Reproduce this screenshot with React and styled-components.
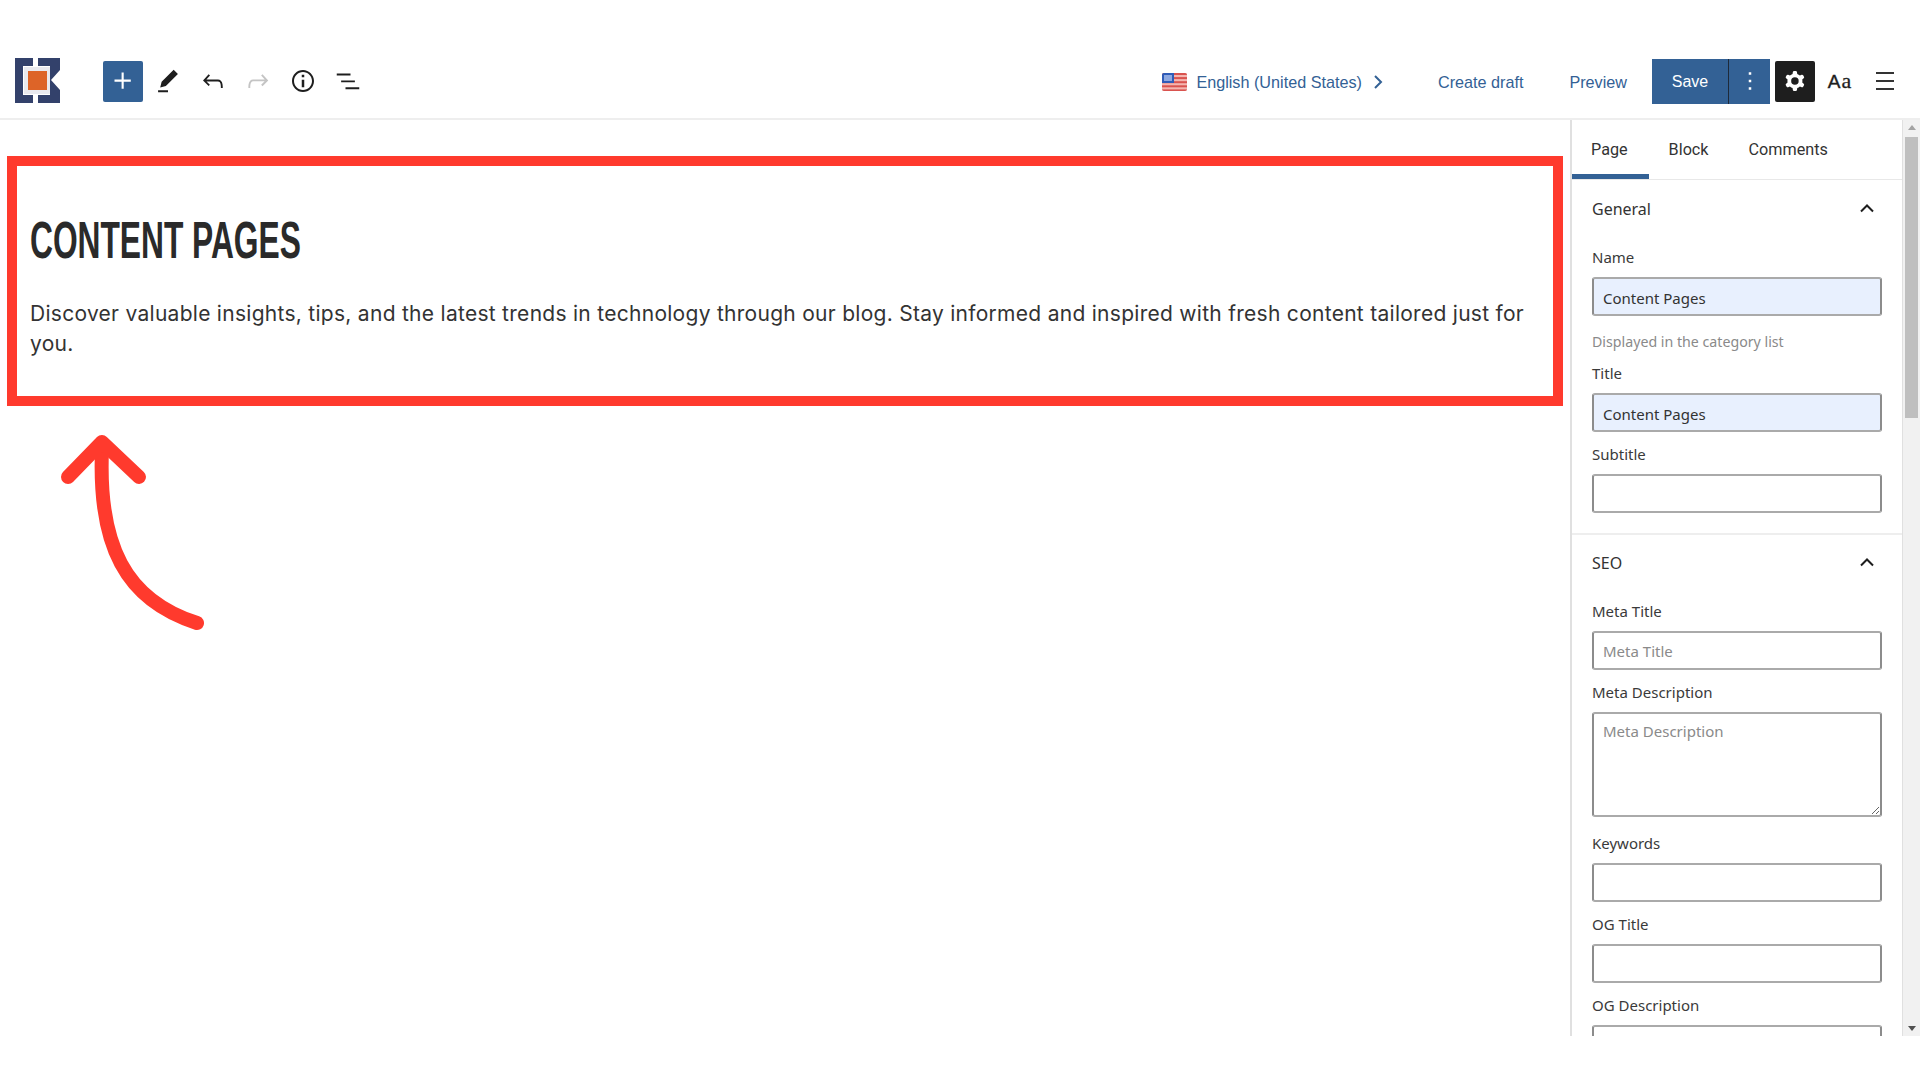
import React from "react";
import styled, { createGlobalStyle } from "styled-components";

const Global = createGlobalStyle`
  html, body { margin: 0; padding: 0; background: #fff; }
  * { box-sizing: border-box; }
`;

const Page = styled.div`
  width: 1920px;
  height: 1080px;
  overflow: hidden;
  display: flex;
  flex-direction: column;
  background: #fff;
  font-family: "Liberation Sans", Arial, sans-serif;
`;

const Header = styled.header`
  height: 120px;
  padding: 44px 12px 0 10px;
  border-bottom: 2px solid #eeeeee;
  display: flex;
  align-items: center;
  flex: none;
`;

const LogoMark = styled.svg`
  width: 60px;
  height: 60px;
  margin-right: 33px;
  flex: none;
`;

const AddButton = styled.div`
  width: 40px;
  height: 41px;
  margin-right: 2px;
  border-radius: 2px;
  background: #336195;
  color: #fff;
  display: flex;
  align-items: center;
  justify-content: center;
`;

const ToolButton = styled.div`
  width: ${(p) => p.$w || 45}px;
  height: 41px;
  display: flex;
  align-items: center;
  justify-content: center;
  color: ${(p) => p.$color || "#1e1e1e"};
  flex: none;
`;

const Glyph = styled.svg`
  width: ${(p) => p.$size || 30}px;
  height: ${(p) => p.$size || 30}px;
  fill: currentColor;
  display: block;
`;

const Right = styled.div`
  margin-left: auto;
  display: flex;
  align-items: center;
`;

const Language = styled.div`
  display: flex;
  align-items: center;
  margin-top: 2px;
  color: #336195;
  font-size: 16.2px;
`;

const Flag = styled.svg`
  width: 25px;
  height: 18px;
  margin-right: 9px;
  border-radius: 2px;
`;

const Chevron = styled.svg`
  width: 12px;
  height: 16px;
  margin-left: 10px;
  fill: none;
  stroke: #336195;
  stroke-width: 2;
`;

const NavLink = styled.a`
  color: #336195;
  font-size: 16.2px;
  margin-top: 2px;
  margin-left: ${(p) => p.$ml}px;
`;

const SaveGroup = styled.div`
  margin-left: 25px;
  margin-right: 5px;
  height: 45px;
  display: flex;
  background: #336195;
  color: #fff;
`;

const SaveLabel = styled.div`
  width: 77px;
  padding-top: 2px;
  border-right: 1px solid #1e2a3a;
  display: flex;
  align-items: center;
  justify-content: center;
  font-size: 16px;
  font-weight: 500;
`;

const SaveMore = styled.div`
  width: 41px;
  display: flex;
  align-items: center;
  justify-content: center;
`;

const SettingsButton = styled(ToolButton)`
  width: 40px;
  border-radius: 2px;
  background: #1e1e1e;
  color: #fff;
`;

const TypeButton = styled.div`
  width: 47px;
  margin-left: 1px;
  height: 41px;
  display: flex;
  align-items: baseline;
  justify-content: center;
  padding-top: 8px;
  color: #1e1e1e;
  font-size: 19px;
  line-height: 24px;
`;

const TypeA = styled.span`
  font-family: "Liberation Sans", sans-serif;
  font-weight: 400;
  -webkit-text-stroke: 0.4px #1e1e1e;
  margin-right: 1px;
`;

const TypeB = styled.span`
  font-family: "Liberation Serif", serif;
  font-weight: 400;
  -webkit-text-stroke: 0.3px #1e1e1e;
  font-size: 22px;
`;

const MenuButton = styled.svg`
  width: 18px;
  height: 20px;
  margin: 0 14px 0 13px;
  stroke: #333;
  stroke-width: 2;
`;

const Body = styled.div`
  display: flex;
  height: 916px;
  flex: none;
  overflow: hidden;
`;

const Main = styled.main`
  width: 1570px;
  flex: none;
  padding: 36px 7px 0;
`;

const Frame = styled.section`
  height: 250px;
  border: 10px solid #ff3a2d;
  padding: 44px 13px 0;
  color: #333;
`;

const Heading = styled.h1`
  margin: 0 0 29px;
  height: 60px;
  font-family: "Liberation Sans Narrow", "Liberation Sans", sans-serif;
  font-size: 52px;
  line-height: 60px;
  font-weight: 700;
  color: #2a2a2a;
  white-space: nowrap;
  transform: scaleX(0.61);
  transform-origin: left center;
`;

const Lead = styled.p`
  margin: 0;
  font-family: Inter, "Open Sans", sans-serif;
  font-size: 21px;
  letter-spacing: 0.28px;
  line-height: 30px;
  color: #333;
`;

const ArrowMark = styled.svg`
  display: block;
  width: 160px;
  height: 210px;
  margin: 20px 0 0 46px;
  fill: none;
  stroke: #ff3a2d;
  stroke-width: 14;
  stroke-linecap: round;
  stroke-linejoin: round;
`;

const Sidebar = styled.aside`
  width: 333px;
  flex: none;
  border-left: 2px solid #e0e0e0;
  border-right: 1px solid #e0e0e0;
  overflow: hidden;
`;

const Tabs = styled.nav`
  height: 60px;
  display: flex;
  border-bottom: 1px solid #e8e8e8;
`;

const Tab = styled.div`
  height: 59px;
  padding: 5px ${(p) => p.$pr || 20}px 0 ${(p) => p.$pl || 20}px;
  display: flex;
  align-items: center;
  font-family: Roboto, sans-serif;
  font-size: 16.2px;
  color: #333;
  border-bottom: 5px solid ${(p) => (p.$active ? "#336195" : "transparent")};
`;

const Section = styled.section`
  padding: ${(p) => p.$top || 0}px 20px 20px;
  border-bottom: ${(p) => (p.$last ? "none" : "2px solid #eeeeee")};
  font-family: "Noto Sans", "Open Sans", sans-serif;
`;

const SectionHead = styled.div`
  height: 56px;
  margin-bottom: 10px;
  display: flex;
  align-items: center;
  justify-content: space-between;
  font-size: 16px;
  color: #333;
`;

const Caret = styled.svg`
  width: 14px;
  height: 10px;
  margin: 0 8px 2px 0;
  fill: none;
  stroke: #1e1e1e;
  stroke-width: 2;
`;

const Field = styled.div`
  margin-top: ${(p) => p.$mt ?? 12}px;
  display: flex;
  flex-direction: column;
`;

const FieldLabel = styled.label`
  height: 20px;
  margin-bottom: 10px;
  font-size: 15px;
  line-height: 20px;
  color: #3a3a3a;
`;

const Help = styled.div`
  height: 20px;
  margin-top: 16px;
  font-size: 14.2px;
  line-height: 20px;
  color: #8a8a8a;
`;

const TextInput = styled.input`
  width: 290px;
  height: 39px;
  padding: ${(p) => (p.$filled ? 2 : 0)}px 9px 0;
  flex: none;
  border: 2px solid;
  border-color: #aaaaaa #8c8c8c #aaaaaa #8c8c8c;
  border-radius: 3px;
  outline: none;
  font: inherit;
  font-size: 15px;
  color: #333;
  background: ${(p) => (p.$filled ? "#e8f0fe" : "#fff")};
  &::placeholder { color: #8a8a8a; opacity: 1; }
`;

const TextArea = styled.textarea`
  width: 290px;
  height: 105px;
  padding: 7px 9px 6px;
  flex: none;
  display: block;
  border: 2px solid;
  border-color: #aaaaaa #8c8c8c #aaaaaa #8c8c8c;
  border-radius: 3px;
  outline: none;
  font: inherit;
  font-size: 15px;
  line-height: 20px;
  color: #333;
  &::placeholder { color: #8a8a8a; opacity: 1; }
`;

const Track = styled.div`
  width: 17px;
  flex: none;
  background: #f1f1f1;
  display: flex;
  flex-direction: column;
  align-items: center;
  padding: 5px 0 5px;
`;

const ScrollUp = styled.div`
  width: 0;
  height: 0;
  border: 4px solid transparent;
  border-top: 0;
  border-bottom: 5px solid #a3a3a3;
`;

const Thumb = styled.div`
  width: 13px;
  height: 281px;
  margin-top: 7px;
  background: #bfbfbf;
`;

const ScrollDown = styled.div`
  width: 0;
  height: 0;
  margin-top: auto;
  border: 4px solid transparent;
  border-bottom: 0;
  border-top: 5px solid #505050;
`;

const Icon = ({ d, size, evenodd }) => (
  <Glyph $size={size} viewBox="0 0 24 24">
    <path d={d} fillRule={evenodd ? "evenodd" : undefined} clipRule={evenodd ? "evenodd" : undefined} />
  </Glyph>
);

const icons = {
  plus: "M11 12.5V17.5H12.5V12.5H17.5V11H12.5V6H11V11H6V12.5H11Z",
  pen: "m19 7-3-3-8.5 8.5-1 4 4-1L19 7Zm-7 11.5H5V20h7v-1.5Z",
  undo: "M18.3 11.7c-.6-.6-1.4-.9-2.3-.9H6.7l2.9-3.3-1.1-1-4.5 5L8.5 16l1-1-2.7-2.7H16c.5 0 .9.2 1.3.5 1 1 1 3.4 1 4.5v.3h1.5v-.2c0-1.5 0-4.3-1.5-5.7z",
  redo: "M15.6 6.5l-1.1 1 2.9 3.3H8c-.9 0-1.7.3-2.3.9-1.4 1.5-1.4 4.2-1.4 5.6v.2h1.5v-.3c0-1.1 0-3.5 1-4.5.3-.3.7-.5 1.3-.5h9.2L14.5 15l1.1 1.1 4.6-4.6-4.6-5z",
  info: "M12 3.2c-4.8 0-8.8 3.9-8.8 8.8 0 4.8 3.9 8.8 8.8 8.8 4.8 0 8.8-3.9 8.8-8.8 0-4.8-4-8.8-8.8-8.8zm0 16c-4 0-7.2-3.3-7.2-7.2C4.8 8 8 4.8 12 4.8s7.2 3.3 7.2 7.2c0 4-3.2 7.2-7.2 7.2zM11 17h2v-6h-2v6zm0-8h2V7h-2v2z",
  list: "M3 6h11v1.5H3V6Zm3.5 5.5h11V13h-11v-1.5ZM21 17H10v1.5h11V17Z",
  dots: "M13 19h-2v-2h2v2zm0-6h-2v-2h2v2zm0-6h-2V5h2v2z",
  cog: "M10.289 4.836A1 1 0 0111.275 4h1.306a1 1 0 01.987.836l.244 1.466c.787.26 1.503.679 2.108 1.218l1.393-.522a1 1 0 011.216.437l.653 1.13a1 1 0 01-.23 1.273l-1.148.944a6.025 6.025 0 010 2.435l1.149.946a1 1 0 01.23 1.272l-.653 1.13a1 1 0 01-1.216.437l-1.394-.522c-.605.54-1.32.958-2.108 1.218l-.244 1.466a1 1 0 01-.987.836h-1.306a1 1 0 01-.986-.836l-.244-1.466a5.995 5.995 0 01-2.108-1.218l-1.394.522a1 1 0 01-1.217-.436l-.653-1.131a1 1 0 01.23-1.272l1.149-.946a6.026 6.026 0 010-2.435l-1.148-.944a1 1 0 01-.23-1.272l.653-1.131a1 1 0 011.217-.437l1.393.522a5.994 5.994 0 012.108-1.218l.244-1.466zM14.929 12a3 3 0 11-6 0 3 3 0 016 0z",
};

const Logo = () => (
  <LogoMark viewBox="0 0 60 60">
    <path fill="#33416b" d="M5 7h18v8H13v29h10v8H5z" />
    <path fill="#33416b" d="M28 7h22v12l-9 10 9 10v13H28v-8h12V15H28z" />
    <rect x="14" y="16" width="26" height="27" fill="#e9e9ee" />
    <rect x="18" y="20" width="19" height="19" fill="#dd6428" />
  </LogoMark>
);

const UsFlag = () => (
  <Flag viewBox="0 0 25 18">
    <rect width="25" height="18" fill="#f4b6b0" />
    {[0, 2, 4, 6, 8].map((i) => (
      <rect key={i} y={i * 2.05} width="25" height="2" fill="#d9534f" />
    ))}
    <rect width="12" height="10" fill="#2f5cb8" />
    <rect x="2" y="2" width="8" height="6" fill="#8ea8e0" />
  </Flag>
);

const Caretup = () => (
  <Caret viewBox="0 0 14 10">
    <path d="M1 8.5 7 2.5 13 8.5" />
  </Caret>
);

const Labeled = ({ label, value, placeholder, mt }) => (
  <Field $mt={mt}>
    <FieldLabel>{label}</FieldLabel>
    <TextInput readOnly $filled={!!value} value={value || ""} placeholder={placeholder} />
  </Field>
);

export default function App() {
  return (
    <Page>
      <Global />
      <Header>
        <Logo />
        <AddButton><Icon d={icons.plus} size={34} /></AddButton>
        <ToolButton><Icon d={icons.pen} size={34} /></ToolButton>
        <ToolButton><Icon d={icons.undo} /></ToolButton>
        <ToolButton $color="#c4c4c4"><Icon d={icons.redo} /></ToolButton>
        <ToolButton><Icon d={icons.info} /></ToolButton>
        <ToolButton><Icon d={icons.list} /></ToolButton>
        <Right>
          <Language>
            <UsFlag />
            English (United States)
            <Chevron viewBox="0 0 12 16"><path d="M3 2l6 6-6 6" /></Chevron>
          </Language>
          <NavLink $ml={54}>Create draft</NavLink>
          <NavLink $ml={46}>Preview</NavLink>
          <SaveGroup>
            <SaveLabel>Save</SaveLabel>
            <SaveMore><Icon d={icons.dots} size={30} /></SaveMore>
          </SaveGroup>
          <SettingsButton><Icon d={icons.cog} evenodd /></SettingsButton>
          <TypeButton><TypeA>A</TypeA><TypeB>a</TypeB></TypeButton>
          <MenuButton viewBox="0 0 18 20">
            <path d="M0 2h18M0 10h18M0 18h18" />
          </MenuButton>
        </Right>
      </Header>
      <Body>
        <Main>
          <Frame>
            <Heading>CONTENT PAGES</Heading>
            <Lead>
              Discover valuable insights, tips, and the latest trends in technology through our blog. Stay informed and inspired with fresh content tailored just for you.
            </Lead>
          </Frame>
          <ArrowMark viewBox="53 426 160 210">
            <path d="M102 450C98 545 125 600 197 623" />
            <path d="M68 477 102 442 139 477" />
          </ArrowMark>
        </Main>
        <Sidebar>
          <Tabs>
            <Tab $active $pl={19} $pr={21}>Page</Tab>
            <Tab>Block</Tab>
            <Tab>Comments</Tab>
          </Tabs>
          <Section $top={1}>
            <SectionHead>General<Caretup /></SectionHead>
            <Labeled mt={0} label="Name" value="Content Pages" />
            <Help>Displayed in the category list</Help>
            <Labeled mt={11} label="Title" value="Content Pages" />
            <Labeled label="Subtitle" />
          </Section>
          <Section $last>
            <SectionHead>SEO<Caretup /></SectionHead>
            <Labeled mt={0} label="Meta Title" placeholder="Meta Title" />
            <Field>
              <FieldLabel>Meta Description</FieldLabel>
              <TextArea readOnly placeholder="Meta Description" />
            </Field>
            <Labeled mt={16} label="Keywords" />
            <Labeled label="OG Title" />
            <Labeled label="OG Description" />
          </Section>
        </Sidebar>
        <Track>
          <ScrollUp />
          <Thumb />
          <ScrollDown />
        </Track>
      </Body>
    </Page>
  );
}
